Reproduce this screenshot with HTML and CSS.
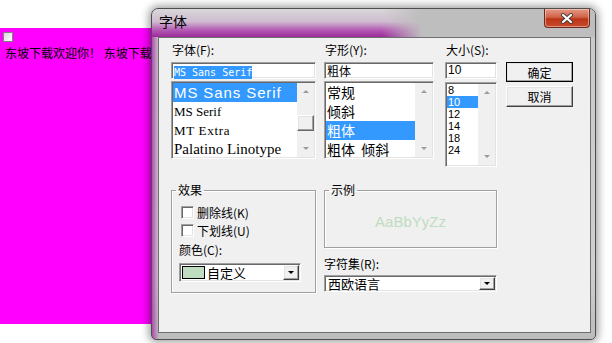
FILE: index.html
```html
<!DOCTYPE html>
<html lang="zh-CN">
<head>
  <meta charset="UTF-8" />
  <title>字体</title>
  <link rel="stylesheet" href="styles.css">
</head>
<body>
  <div class="host">
    <span class="chk"></span>
    <p class="welcome">东坡下载欢迎你！ 东坡下载欢迎你！</p>
  </div>

  <div class="dialog">
    <div class="titlebar">
      <span class="title">字体</span>
      <button class="close">
        <svg width="14" height="11" viewBox="0 0 14 11">
          <path d="M3 2 L11 9 M11 2 L3 9" stroke="#4a3a36" stroke-width="4" stroke-linecap="round"/>
          <path d="M3 2 L11 9 M11 2 L3 9" stroke="#fff" stroke-width="2.2" stroke-linecap="round"/>
        </svg>
      </button>
    </div>

    <div class="client">
      <div class="top">
        <div class="col col-font">
          <label>字体(F):</label>
          <div class="edit sunken"><span class="sel mono">MS Sans Serif</span></div>
          <div class="list sunken list-font">
            <ul>
              <li class="selected f-sans">MS Sans Serif</li>
              <li class="f-serif">MS Serif</li>
              <li class="f-extra">MT Extra</li>
              <li class="f-pal">Palatino Linotype</li>
            </ul>
            <div class="vscroll">
              <span class="arrow-box"><i class="arrow up"></i></span>
              <span class="track"><span class="thumb"></span></span>
              <span class="arrow-box"><i class="arrow down"></i></span>
            </div>
          </div>
        </div>

        <div class="col col-style">
          <label>字形(Y):</label>
          <div class="edit sunken">粗体</div>
          <div class="list sunken list-style">
            <ul>
              <li>常规</li>
              <li>倾斜</li>
              <li class="selected">粗体</li>
              <li>粗体&nbsp;&nbsp;倾斜</li>
            </ul>
            <div class="vscroll">
              <span class="arrow-box"><i class="arrow up"></i></span>
              <span class="track"></span>
              <span class="arrow-box"><i class="arrow down"></i></span>
            </div>
          </div>
        </div>

        <div class="col col-size">
          <label>大小(S):</label>
          <div class="edit sunken num">10</div>
          <div class="list sunken list-size">
            <ul>
              <li>8</li>
              <li class="selected">10</li>
              <li>12</li>
              <li>14</li>
              <li>18</li>
              <li>24</li>
            </ul>
            <div class="vscroll">
              <span class="arrow-box"><i class="arrow up"></i></span>
              <span class="track"></span>
              <span class="arrow-box"><i class="arrow down"></i></span>
            </div>
          </div>
        </div>

        <div class="buttons">
          <button class="btn raised default">确定</button>
          <button class="btn raised">取消</button>
        </div>
      </div>

      <div class="bottom">
        <fieldset class="group effects">
          <legend>效果</legend>
          <div class="check-row"><span class="box sunken"></span><span>删除线(K)</span></div>
          <div class="check-row second"><span class="box sunken"></span><span>下划线(U)</span></div>
          <div class="color-label">颜色(C):</div>
          <div class="combo sunken color-combo">
            <span class="swatch"></span>
            <span class="combo-text">自定义</span>
            <span class="drop raised"><i class="arrow down dark"></i></span>
          </div>
        </fieldset>

        <div class="col-right">
          <fieldset class="group sample">
            <legend>示例</legend>
            <div class="sample-text">AaBbYyZz</div>
          </fieldset>
          <div class="charset-label">字符集(R):</div>
          <div class="combo sunken charset-combo">
            <span class="combo-text">西欧语言</span>
            <span class="drop raised"><i class="arrow down dark"></i></span>
          </div>
        </div>
      </div>
    </div>
  </div>
</body>
</html>
```

FILE: styles.css
```css
* {
  box-sizing: border-box;
}

body {
  margin: 0;
  width: 612px;
  height: 343px;
  overflow: hidden;
  position: relative;
  background: #fff;
  font-family: "Noto Sans CJK SC", "Liberation Sans", sans-serif;
  font-size: 12px;
  color: #000;
}

/* page behind the dialog */
.host {
  margin-top: 28px;
  width: 415px;
  height: 296px;
  background: #ff00ff;
  padding: 4px 0 0 3px;
}

.chk {
  display: block;
  width: 10px;
  height: 10px;
  border: 1px solid #808080;
  background: linear-gradient(135deg, #d8d8d8, #fff);
}

.welcome {
  margin: 4px 0 0 2px;
  line-height: 14px;
  white-space: nowrap;
}

/* dialog window */
.dialog {
  position: absolute;
  left: 151px;
  top: 8px;
  width: 445px;
  height: 332px;
  display: flex;
  flex-direction: column;
  border: 1px solid #4e4e4e;
  border-radius: 7px 7px 5px 5px;
  box-shadow: 0 0 9px 2px rgba(0,0,0,0.4);
  background:
    linear-gradient(to right, rgba(165,40,165,0.75) 0, rgba(165,40,165,0) 7px),
    linear-gradient(to bottom, #c9c9c9, #cfcfcf 80%, #bcbcbc);
}

.titlebar {
  height: 28px;
  display: flex;
  justify-content: space-between;
  align-items: flex-start;
  padding-left: 7px;
  border-radius: 6px 6px 0 0;
  background-image:
    linear-gradient(to right, rgba(240,240,240,0) 0, rgba(240,240,240,0) 230px, rgba(190,190,190,1) 270px),
    linear-gradient(to bottom, #d8d8d8 0, #d0bcd0 45%, #b45ab4 75%, #9a2a9a 100%);
  background-color: #b8b8b8;
}

.title {
  margin-top: 2px;
  font-size: 14px;
  line-height: 20px;
}

.close {
  margin-right: 5px;
  width: 46px;
  height: 19px;
  padding: 0;
  display: flex;
  align-items: center;
  justify-content: center;
  border: 1px solid #6d2b20;
  border-top: none;
  border-radius: 0 0 4px 4px;
  background: linear-gradient(to bottom, #e39a86, #d0644a 45%, #bb3518 55%, #c84a2a);
  box-shadow: inset 0 0 0 1px rgba(255,220,210,0.5);
}

.client {
  flex: 1;
  margin: 0 4px 6px 6px;
  background: #f0f0f0;
  border: 1px solid #6f6f6f;
  padding: 5px 0 0 12px;
}

/* common 3D pieces */
.sunken {
  border: 1px solid;
  border-color: #a0a0a0 #fff #fff #a0a0a0;
  padding: 1px;
  box-shadow: inset 1px 1px 0 #696969, inset -1px -1px 0 #e3e3e3;
  background: #fff;
}

.raised {
  border: 1px solid;
  border-color: #fff #404040 #404040 #fff;
  box-shadow: inset -1px -1px 0 #a0a0a0, inset 1px 1px 0 #e3e3e3;
  background: #f0f0f0;
}

.top {
  display: flex;
  align-items: flex-start;
}

.col label {
  display: block;
  height: 19px;
  line-height: 14px;
  padding-left: 1px;
}

.col-font { width: 145px; }
.col-style { width: 110px; margin-left: 8px; }
.col-size { width: 52px; margin-left: 11px; }

.edit {
  height: 17px;
  line-height: 13px;
  padding: 1px 2px;
  white-space: nowrap;
}

.edit.num {
  font-family: "Liberation Sans", sans-serif;
  font-size: 12px;
}

.sel {
  background: #3399ff;
  color: #fff;
}

.mono {
  font-family: "DejaVu Sans Mono", "Liberation Mono", monospace;
  font-size: 10px;
  line-height: 13px;
  display: inline-block;
}

.list {
  margin-top: 2px;
  display: flex;
  overflow: hidden;
}

.list ul {
  flex: 1;
  margin: 0;
  padding: 0;
  list-style: none;
  overflow: hidden;
}

.list li {
  padding-left: 1px;
  white-space: nowrap;
}

.list li.selected {
  background: #3399ff;
  color: #fff;
}

.list-font { height: 78px; }
.list-style { height: 78px; }
.list-size { height: 85px; margin-top: 3px; }

.list-font li,
.list-style li {
  height: 19px;
  line-height: 19px;
}

.list-style li {
  font-size: 14px;
  line-height: 18px;
}

.f-sans {
  font-family: "Liberation Sans", sans-serif;
  font-size: 15px;
  letter-spacing: 0.9px;
}

.f-serif {
  font-family: "Liberation Serif", serif;
  font-size: 13px;
}

.f-extra {
  font-family: "Liberation Serif", serif;
  font-size: 13px;
  letter-spacing: 0.7px;
}

.f-pal {
  font-family: "Liberation Serif", serif;
  font-size: 15px;
}

.list-size li {
  height: 12px;
  line-height: 12px;
  font-family: "Liberation Sans", sans-serif;
  font-size: 11px;
}

.vscroll {
  width: 17px;
  display: flex;
  flex-direction: column;
  background: #f0f0f0;
}

.arrow-box {
  height: 17px;
  display: flex;
  align-items: center;
  justify-content: center;
}

.track {
  flex: 1;
}

.thumb {
  display: block;
  margin-top: 15px;
  height: 16px;
  border: 1px solid;
  border-color: #fff #696969 #696969 #fff;
  box-shadow: inset -1px -1px 0 #a0a0a0, inset 1px 1px 0 #e3e3e3;
  background: #f0f0f0;
}

.arrow {
  width: 0;
  height: 0;
  border-left: 3px solid transparent;
  border-right: 3px solid transparent;
}

.arrow.up { border-bottom: 3px solid #9a9a9a; }
.arrow.down { border-top: 3px solid #9a9a9a; }
.arrow.dark { border-top-color: #000; }

.buttons {
  width: 67px;
  margin-left: 9px;
  padding-top: 19px;
  display: flex;
  flex-direction: column;
}

.btn {
  height: 20px;
  padding: 0;
  font-family: inherit;
  font-size: 12px;
  color: #000;
}

.btn + .btn {
  margin-top: 4px;
  height: 21px;
}

.btn.default {
  outline: 1px solid #000;
  outline-offset: -1px;
}

/* lower half */
.bottom {
  display: flex;
  margin-top: 16px;
}

.group {
  margin: 0;
  padding: 0 0 0 4px;
  border: 1px solid #a0a0a0;
  box-shadow: 1px 1px 0 #fff, inset 1px 1px 0 #fff;
}

.group legend {
  padding: 0 2px;
  line-height: 14px;
}

.effects {
  width: 145px;
  height: 110px;
  padding-top: 7px;
}

.check-row {
  display: flex;
  align-items: center;
  height: 17px;
  margin-left: 5px;
  gap: 3px;
}

.check-row.second { margin-top: 1px; }

.box {
  width: 13px;
  height: 13px;
}

.color-label {
  margin: 3px 0 0 3px;
  line-height: 16px;
}

.combo {
  display: flex;
  align-items: center;
  padding: 1px;
}

.color-combo {
  margin: 5px 0 0 3px;
  width: 122px;
  height: 19px;
}

.swatch {
  width: 23px;
  height: 13px;
  margin-left: 1px;
  border: 1px solid #000;
  background: #c0dcc0;
}

.combo-text {
  flex: 1;
  margin-left: 2px;
  font-size: 13px;
  line-height: 15px;
}

.drop {
  width: 16px;
  height: 100%;
  display: flex;
  align-items: center;
  justify-content: center;
}

.col-right {
  width: 173px;
  margin-left: 8px;
}

.sample {
  height: 65px;
}

.sample-text {
  height: 49px;
  display: flex;
  align-items: center;
  justify-content: center;
  margin-left: -4px;
  font-family: "Liberation Sans", sans-serif;
  font-size: 15px;
  color: #c0dcc0;
}

.charset-label {
  margin-top: 9px;
  line-height: 14px;
}

.charset-combo {
  margin-top: 4px;
  width: 173px;
  height: 17px;
}

.charset-combo .combo-text {
  font-size: 13px;
  line-height: 13px;
}
```
